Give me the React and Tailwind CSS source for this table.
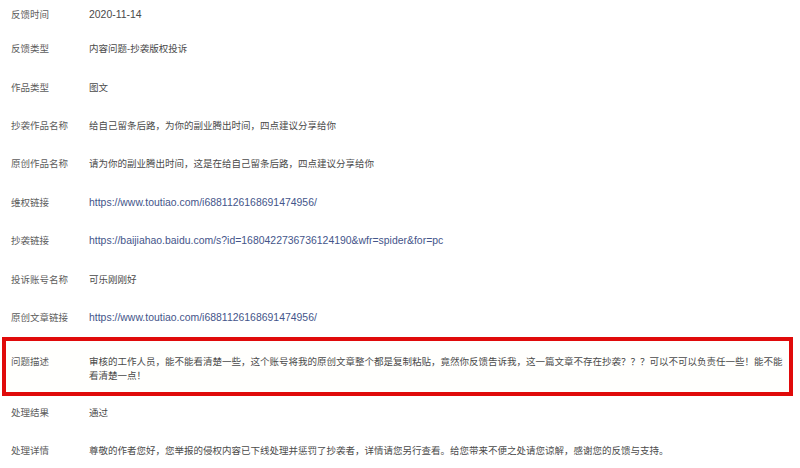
import React from "react";

const rows = [
  ["反馈时间", "2020-11-14", "num"],
  ["反馈类型", "内容问题-抄袭版权投诉"],
  ["作品类型", "图文"],
  ["抄袭作品名称", "给自己留条后路，为你的副业腾出时间，四点建议分享给你"],
  ["原创作品名称", "请为你的副业腾出时间，这是在给自己留条后路，四点建议分享给你"],
  ["维权链接", "https://www.toutiao.com/i6881126168691474956/", "link"],
  ["抄袭链接", "https://baijiahao.baidu.com/s?id=1680422736736124190&wfr=spider&for=pc", "link"],
  ["投诉账号名称", "可乐刚刚好"],
  ["原创文章链接", "https://www.toutiao.com/i6881126168691474956/", "link"],
];

function Row({ label, value, kind, first }) {
  const cls =
    kind === "link"
      ? "text-[#44558a] text-[10.45px]"
      : kind === "num"
      ? "text-[#4a4a4a] text-[10.45px]"
      : "text-[#4a4a4a]";
  return (
    <div className={`flex items-center pl-[11px] ${first ? "h-[30px]" : "h-[38.4px]"}`}>
      <div className="w-[78px] shrink-0 text-[#5c5c5c]">{label}</div>
      <div className={cls}>{value}</div>
    </div>
  );
}

export default function App() {
  return (
    <div
      className="w-[800px] h-[468px] overflow-hidden bg-white text-[9.5px] leading-[14px]"
      style={{ fontFamily: '"Liberation Sans", "Noto Sans CJK SC", sans-serif' }}
    >
      {rows.map(([l, v, kind], i) => (
        <Row key={i} label={l} value={v} kind={kind} first={i === 0} />
      ))}
      <div className="ml-[2px] w-[791px] h-[59px] border-4 border-[#e00a0a] bg-[#fffffd] flex pl-[5px] pt-[14px]">
        <div className="w-[78px] shrink-0 text-[#5c5c5c]">问题描述</div>
        <div className="w-[700px] whitespace-nowrap text-[#4a4a4a]">
          审核的工作人员，能不能看清楚一些，这个账号将我的原创文章整个都是复制粘贴，竟然你反馈告诉我，这一篇文章不存在抄袭？？？可以不可以负责任一些！能不能
          <br />
          看清楚一点！
        </div>
      </div>
      <div className="flex items-center pl-[11px] h-[34px]">
        <div className="w-[78px] shrink-0 text-[#5c5c5c]">处理结果</div>
        <div className="text-[#4a4a4a]">通过</div>
      </div>
      <div className="flex items-center pl-[11px] h-[42px]">
        <div className="w-[78px] shrink-0 text-[#5c5c5c]">处理详情</div>
        <div className="text-[#4a4a4a]">
          尊敬的作者您好，您举报的侵权内容已下线处理并惩罚了抄袭者，详情请您另行查看。给您带来不便之处请您谅解，感谢您的反馈与支持。
        </div>
      </div>
    </div>
  );
}
